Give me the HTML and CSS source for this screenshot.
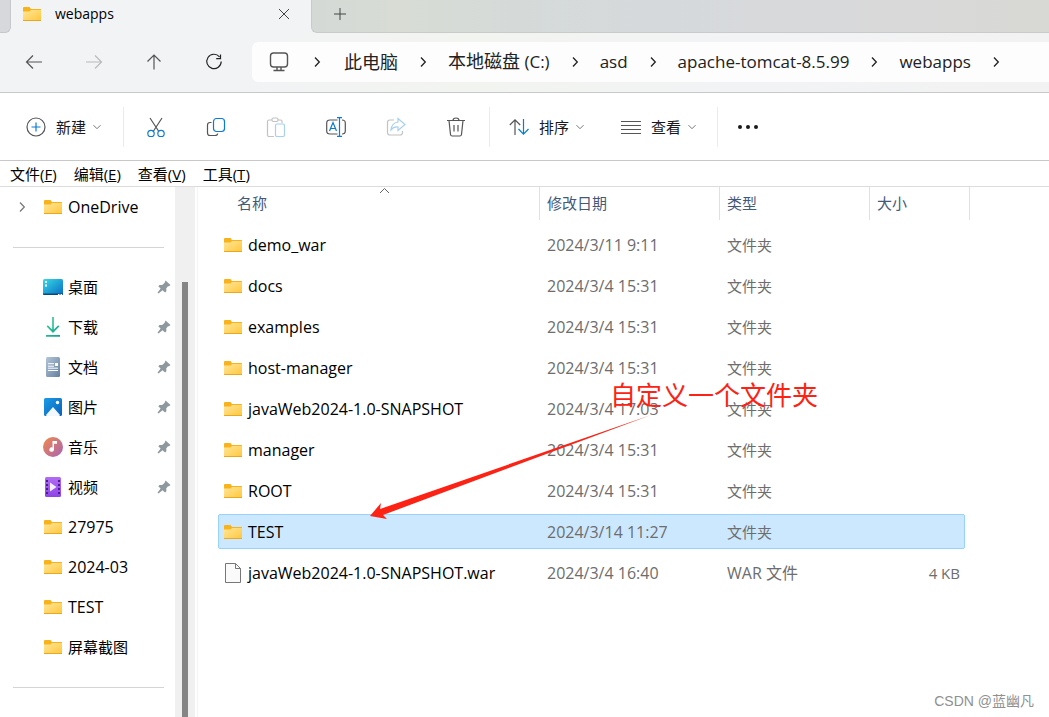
FILE: index.html
```html
<!DOCTYPE html>
<html lang="zh-CN">
<head>
<meta charset="utf-8">
<title>webapps</title>
<link rel="stylesheet" href="styles.css">
</head>
<body>
<svg class="defs" aria-hidden="true">
  <defs>
    <linearGradient id="gFolder" x1="0" y1="0" x2="1" y2="1"><stop offset="0" stop-color="#ffe69a"/><stop offset="1" stop-color="#ffc73a"/></linearGradient>
    <linearGradient id="gDesk" x1="0" y1="0" x2="1" y2="1"><stop offset="0" stop-color="#35dbe6"/><stop offset="1" stop-color="#0a6cc4"/></linearGradient>
    <linearGradient id="gDown" x1="0" y1="0" x2="1" y2="1"><stop offset="0" stop-color="#3ecf8a"/><stop offset="1" stop-color="#0f9f9c"/></linearGradient>
    <linearGradient id="gDoc" x1="0" y1="0" x2="1" y2="1"><stop offset="0" stop-color="#b3c5da"/><stop offset="1" stop-color="#64809f"/></linearGradient>
    <linearGradient id="gPic" x1="0" y1="0" x2="1" y2="1"><stop offset="0" stop-color="#1a9be6"/><stop offset="1" stop-color="#0a62b8"/></linearGradient>
    <linearGradient id="gMus" x1="0" y1="0" x2="1" y2="1"><stop offset="0" stop-color="#f2894a"/><stop offset="1" stop-color="#a763b4"/></linearGradient>
    <linearGradient id="gVid" x1="0" y1="0" x2="0" y2="1"><stop offset="0" stop-color="#b26cf2"/><stop offset="1" stop-color="#8e43e6"/></linearGradient>
  </defs>
  <symbol id="folder" viewBox="0 0 20 20">
    <path d="M1 4q0-1 1-1h5.500l1.500 2h9.500q.5 0 .5.500V10H1z" fill="#f8b31c"/>
    <path d="M1 7.500h6.500L9 6h10v11H1z" fill="url(#gFolder)"/>
    <path d="M1 16.500h18" stroke="#e9a820"/>
  </symbol>
  <symbol id="chev" viewBox="0 0 10 10"><path d="M1.500 3.200L5 6.700l3.500-3.500" fill="none" stroke="#777"/></symbol>
  <symbol id="next" viewBox="0 0 8 12"><path d="M2 1.500L6.300 6 2 10.500" fill="none" stroke="#222" stroke-width="1.300"/></symbol>
  <symbol id="pin" viewBox="0 0 14 14"><path d="M8.500 0.500l5 4.500-1.500 1.200-1 .1-1.800 2.200.2 2.700-1.300 1.300-2.600-2.300L1.500 13.500.5 12.800 3.600 8.500 1.300 6.200 2.500 5h2.700l2.300-2z" fill="#8e989f"/></symbol>
</svg>

<header class="tabs">
  <div class="tab-prev"></div>
  <div class="tab">
    <svg class="i20"><use href="#folder"/></svg>
    <span class="tab-title">webapps</span>
    <button class="icon-btn" aria-label="关闭"><svg width="12" height="12" fill="none" stroke="#444"><path d="M1 1l10 10M11 1L1 11"/></svg></button>
  </div>
  <div class="tab-rest"><button class="icon-btn" aria-label="新标签页"><svg width="12" height="12" fill="none" stroke="#444"><path d="M6 0v12M0 6h12"/></svg></button></div>
</header>

<div class="nav">
  <button class="nav-btn" aria-label="后退"><svg class="i20 line"><path d="M18 10H2.500M9 3.500L2.500 10 9 16.500"/></svg></button>
  <button class="nav-btn faded" aria-label="前进"><svg class="i20 line"><path d="M2 10h15.500M11 3.500l6.500 6.500-6.500 6.500"/></svg></button>
  <button class="nav-btn" aria-label="向上"><svg class="i20 line"><path d="M10 17.500V3M3.500 9.500L10 3l6.500 6.500"/></svg></button>
  <button class="nav-btn" aria-label="刷新"><svg class="i20 line dark"><path d="M15.500 4.800A7.200 7.200 0 1 0 17.200 9.500M16.500 2.500v4.200h-4.300"/></svg></button>
  <nav class="address" aria-label="地址">
    <svg class="i20 monitor" fill="none" stroke="#555" stroke-width="1.400"><rect x="1.500" y="1" width="17" height="14" rx="3"/><path d="M8 15v3M12 15v3M4.500 18.500h11"/></svg>
    <svg class="sep"><use href="#next"/></svg>
    <a href="#" class="han">此电脑</a><svg class="sep"><use href="#next"/></svg>
    <a href="#"><span class="han">本地磁盘</span> (C:)</a><svg class="sep"><use href="#next"/></svg>
    <a href="#">asd</a><svg class="sep"><use href="#next"/></svg>
    <a href="#">apache-tomcat-8.5.99</a><svg class="sep"><use href="#next"/></svg>
    <a href="#">webapps</a><svg class="sep"><use href="#next"/></svg>
  </nav>
</div>

<div class="toolbar">
  <button class="cmd first"><svg class="i20 line"><circle cx="10" cy="10" r="9"/><path class="blue" d="M10 5.500v9M5.500 10h9"/></svg>新建<svg class="chev"><use href="#chev"/></svg></button>
  <div class="group">
    <button class="tool" aria-label="剪切"><svg class="i20 line"><path d="M4 1l8.500 13M16 1L7.500 14"/><g class="blue"><circle cx="5" cy="16.500" r="3.200"/><circle cx="15" cy="16.500" r="3.200"/></g></svg></button>
    <button class="tool" aria-label="复制"><svg class="i20 line"><path d="M5.500 5.500H4q-2.500 0-2.500 2.500v8q0 2.500 2.500 2.500h5q2.500 0 2.700-2"/><rect class="blue" x="7.500" y="1.500" width="11" height="13" rx="3"/></svg></button>
    <button class="tool faded" aria-label="粘贴"><svg class="i20 line"><path d="M6 3H3Q1.500 3 1.500 4.500V18q0 1.500 1.500 1.500h5M12 3h2.500Q16 3 16 4.500V6"/><rect x="6" y="1" width="6" height="3.500" rx="1.500"/><rect class="blue" x="9.500" y="7" width="9" height="12.500" rx="1.500"/></svg></button>
    <button class="tool" aria-label="重命名"><svg class="i20 line"><path d="M11.500 3H4Q.7 3 .7 6v8q0 3 3.300 3h7.500M16 3q3.300 0 3.300 3v8q0 3-3.300 3"/><path class="blue" d="M3.500 14L7 5.500 10.500 14M4.800 11.500h4.500M13.500 1v18M11 .7h5M11 19.300h5"/></svg></button>
    <button class="tool faded" aria-label="共享"><svg class="i20 line"><path d="M8 3H4Q1.500 3 1.500 5.500v10Q1.500 18 4 18h10q2.500 0 2.500-2.500V14"/><path class="blue" d="M12 1.500L19 7.500l-7 6v-3.500q-4.500-.5-7 3Q5.500 6 12 5z"/></svg></button>
    <button class="tool" aria-label="删除"><svg class="i20 line"><path d="M1 3.500h18M7 3.500Q7 1 10 1t3 2.500M3 3.500l1.500 14q.2 1.500 1.700 1.500h7.600q1.500 0 1.700-1.500L17 3.500M8 8v6.500M12 8v6.500"/></svg></button>
  </div>
  <div class="group pair">
    <button class="cmd"><svg class="i20 line"><path d="M6 18V3M.8 8L6 2.800 11.200 8"/><path class="blue" d="M14.500 2v15M9.500 12l5 5.200 5-5.200"/></svg>排序<svg class="chev"><use href="#chev"/></svg></button>
    <button class="cmd"><svg class="i20 line"><path d="M0 4.500h20M0 8.500h20M0 12.500h20M0 16.500h20"/></svg>查看<svg class="chev"><use href="#chev"/></svg></button>
  </div>
  <button class="tool" aria-label="更多"><svg class="i20" fill="#1a1a1a"><circle cx="2" cy="10" r="2"/><circle cx="10" cy="10" r="2"/><circle cx="18" cy="10" r="2"/></svg></button>
</div>

<div class="menubar">
  <button>文件(<u>F</u>)</button><button>编辑(<u>E</u>)</button><button>查看(<u>V</u>)</button><button>工具(<u>T</u>)</button>
</div>

<div class="body">
  <aside class="side">
    <a class="item latin" href="#"><svg class="expand"><use href="#next"/></svg><svg class="i20"><use href="#folder"/></svg><span>OneDrive</span></a>
    <hr>
    <a class="item" href="#"><svg class="i20"><rect y="2" width="20" height="16" rx="1.500" fill="url(#gDesk)"/><path d="M0 16.500h20V17q0 1-1 1H1q-1 0-1-1z" fill="#0b4a78"/><path d="M2 4h2v2H2zM2 7.500h2v2H2z" fill="#fff"/><path d="M15 17.500h1.500M17.500 17.500H19" stroke="#fff"/></svg><span>桌面</span><svg class="pin"><use href="#pin"/></svg></a>
    <a class="item" href="#"><svg class="i20"><path d="M9.200 0h1.600v12.500l4.400-4.300 1.100 1.200L10 16 3.700 9.400l1.100-1.200 4.400 4.300zM3 18h14v1.800H3z" fill="url(#gDown)"/></svg><span>下载</span><svg class="pin"><use href="#pin"/></svg></a>
    <a class="item" href="#"><svg class="i20"><rect x="3" width="14" height="20" rx="1.500" fill="url(#gDoc)"/><path d="M5 6.700h6M5 9.200h6M5 11.200h10M5 13.500h10" stroke="#fff"/><path d="M12 6h3v3h-3z" fill="#fff"/></svg><span>文档</span><svg class="pin"><use href="#pin"/></svg></a>
    <a class="item" href="#"><svg class="i20"><rect x="1" y="1" width="18" height="18" rx="1.500" fill="url(#gPic)"/><path d="M3 18l7-8 7 8q-.5 1-1 1H4q-.7 0-1-1z" fill="#f2f8fe"/><circle cx="14.500" cy="5.500" r="1.700" fill="#fff"/></svg><span>图片</span><svg class="pin"><use href="#pin"/></svg></a>
    <a class="item" href="#"><svg class="i20"><circle cx="10" cy="10" r="10" fill="url(#gMus)"/><path d="M9.500 4H14v2.800h-3V12.500a2.300 2.300 0 1 1-1.500-2.100z" fill="#fff"/></svg><span>音乐</span><svg class="pin"><use href="#pin"/></svg></a>
    <a class="item" href="#"><svg class="i20"><rect x="2" width="16" height="20" rx="1.500" fill="url(#gVid)"/><path d="M4 3v15M16 3v15" stroke="#4a1b93" stroke-width="2" stroke-dasharray="2 2"/><path d="M7 5.500v9l6.500-4.500z" fill="#f4efff"/></svg><span>视频</span><svg class="pin"><use href="#pin"/></svg></a>
    <a class="item latin" href="#"><svg class="i20"><use href="#folder"/></svg><span>27975</span></a>
    <a class="item latin" href="#"><svg class="i20"><use href="#folder"/></svg><span>2024-03</span></a>
    <a class="item latin" href="#"><svg class="i20"><use href="#folder"/></svg><span>TEST</span></a>
    <a class="item" href="#"><svg class="i20"><use href="#folder"/></svg><span>屏幕截图</span></a>
    <hr>
  </aside>
  <div class="scroll"><div class="thumb"></div></div>
  <main class="files">
    <table>
      <thead><tr><th>名称<svg class="sorted" fill="none" stroke="#666"><path d="M1 6l4.500-4.500L10 6"/></svg></th><th>修改日期</th><th>类型</th><th>大小</th></tr></thead>
      <tbody>
        <tr><td class="latin"><svg class="i20"><use href="#folder"/></svg>demo_war</td><td class="latin">2024/3/11 9:11</td><td>文件夹</td><td></td></tr>
        <tr><td class="latin"><svg class="i20"><use href="#folder"/></svg>docs</td><td class="latin">2024/3/4 15:31</td><td>文件夹</td><td></td></tr>
        <tr><td class="latin"><svg class="i20"><use href="#folder"/></svg>examples</td><td class="latin">2024/3/4 15:31</td><td>文件夹</td><td></td></tr>
        <tr><td class="latin"><svg class="i20"><use href="#folder"/></svg>host-manager</td><td class="latin">2024/3/4 15:31</td><td>文件夹</td><td></td></tr>
        <tr><td class="latin"><svg class="i20"><use href="#folder"/></svg>javaWeb2024-1.0-SNAPSHOT</td><td class="latin">2024/3/4 17:03</td><td>文件夹</td><td></td></tr>
        <tr><td class="latin"><svg class="i20"><use href="#folder"/></svg>manager</td><td class="latin">2024/3/4 15:31</td><td>文件夹</td><td></td></tr>
        <tr><td class="latin"><svg class="i20"><use href="#folder"/></svg>ROOT</td><td class="latin">2024/3/4 15:31</td><td>文件夹</td><td></td></tr>
        <tr class="selected"><td class="latin"><svg class="i20"><use href="#folder"/></svg>TEST</td><td class="latin">2024/3/14 11:27</td><td>文件夹</td><td></td></tr>
        <tr><td class="latin"><svg class="i20"><path d="M2.500.5h10l5 5v14h-15z" fill="#fafafa" stroke="#777"/><path d="M12.500.5v5h5" fill="none" stroke="#777"/></svg>javaWeb2024-1.0-SNAPSHOT.war</td><td class="latin">2024/3/4 16:40</td><td class="latin">WAR 文件</td><td>4 KB</td></tr>
      </tbody>
    </table>
    <svg class="arrow" width="282" height="106" aria-hidden="true"><path d="M281 0L10 94l1-6L0 101l17 3-4-4z" fill="#fd2214"/></svg>
    <p class="note">自定义一个文件夹</p>
    <p class="credit">CSDN @蓝幽凡</p>
  </main>
</div>
</body>
</html>
```
FILE: styles.css
```css
* { box-sizing: border-box; }
body {
  margin: 0;
  height: 100vh;
  display: flex;
  flex-direction: column;
  overflow: hidden;
  background: #fff;
  color: #000;
  font: 15px/20px "Open Sans", "Noto Sans CJK SC", sans-serif;
}
button { font: inherit; color: inherit; background: none; border: 0; padding: 0; }
a { color: inherit; text-decoration: none; }
svg { flex: none; }
.defs { position: absolute; width: 0; height: 0; }
.latin { font-size: 16px; }
.i20 { width: 20px; height: 20px; }
.line { fill: none; stroke: #555; stroke-width: 1.200; }
.dark { stroke: #222; }
.blue { stroke: #0a7bd2; }
.faded { opacity: .35; }

.tabs { display: flex; flex: none; height: 33px; background: #f2f3f5; }
.tab-prev { width: 11px; background: #d6d8dc; border: 1px solid #c6c9cb; border-width: 0 1px 1px 0; border-radius: 0 0 6px 0; }
.tab { width: 300px; display: flex; align-items: center; padding: 0 20px 6px 11px; }
.tab-title { flex: 1; margin-left: 13px; font-size: 14px; font-weight: 500; }
.icon-btn { display: grid; place-items: center; width: 14px; height: 20px; }
.tab-rest {
  flex: 1;
  padding: 4px 21px;
  border: 1px solid #c8cbca;
  border-width: 0 0 1px 1px;
  border-radius: 0 0 0 6px;
  background: linear-gradient(90deg, #d5d9d6, #d8dcd5 12%, #d5dad9 28%, #d6d9dc 50%, #d9d9da 78%, #d8d9d4);
}

.nav {
  display: flex;
  flex: none;
  align-items: center;
  height: 60px;
  padding: 0 0 2px 4px;
  border-bottom: 1px solid #c6c9ca;
  background: linear-gradient(90deg, #f2f3f5 22%, #f2f4f0 45%, #f2f3f5 72%, #f2f2f2);
}
.nav-btn { display: grid; place-items: center; width: 60px; height: 40px; }
.address {
  flex: 1;
  display: flex;
  align-items: center;
  height: 40px;
  margin-left: 8px;
  padding-left: 17px;
  border-radius: 6px 0 0 6px;
  background: #fcfdfc;
  color: #222;
  font-size: 17px;
  white-space: nowrap;
}
.han { font-size: 18px; }
.sep { width: 8px; height: 12px; margin: 0 21px; }
.monitor + .sep { margin: 0 23px 0 24px; }

.toolbar { display: flex; flex: none; align-items: center; height: 68px; border-bottom: 1px solid #c8c8c8; color: #1a1a1a; }
.cmd { display: flex; align-items: center; gap: 10px; }
.chev { width: 10px; height: 10px; margin-left: -4px; }
.first { margin: 0 21px 0 26px; }
.group { display: flex; height: 40px; padding: 0 3px 0 2px; border: 1px solid #ebebeb; border-width: 0 1px; }
.pair { gap: 36px; padding: 0 20px 0 19px; border-left: 0; }
.tool { display: grid; place-items: center; width: 60px; height: 40px; }

.menubar { display: flex; flex: none; gap: 17px; height: 26px; padding-left: 10px; border-bottom: 1px solid #dcdcdc; }
.menubar button { height: 26px; }

.body { flex: 1; display: flex; min-height: 0; }
.side { width: 175px; overflow: hidden; }
.item { display: flex; align-items: center; height: 40px; padding: 0 4px 0 43px; }
.item span { flex: 1; margin-left: 5px; }
.expand { width: 8px; height: 12px; margin: 0 17px 0 -25px; opacity: .6; }
.pin { width: 14px; height: 14px; }
.side hr { height: 1px; margin: 20px 11px 19px 13px; border: 0; background: #d4d4d4; }
.scroll { flex: none; width: 20px; padding: 95px 7px 0; background: #f0f0f0; }
.thumb { height: 100%; background: #858585; }

.files { position: relative; flex: 1; margin-left: 2px; padding-left: 20px; border-left: 1px solid #f5f5f5; }
table, thead, tbody { display: block; }
tr { display: grid; grid-template-columns: 321px 180px 150px 96px; width: 747px; height: 35px; margin-bottom: 6px; border: 1px solid transparent; border-radius: 2px; }
thead tr { grid-template-columns: 322px 180px 150px 100px; width: 752px; height: 33px; margin-bottom: 7px; border: 0; }
th { position: relative; padding: 6px 0 0 7px; border-right: 1px solid #e0e0e0; text-align: left; font-weight: 400; color: #44597a; }
th:first-child { padding-left: 19px; }
.sorted { position: absolute; top: 0; left: 50%; width: 11px; height: 7px; }
td { display: flex; align-items: center; padding: 0 0 0 7px; color: #6d6d6d; }
td:first-child { padding-left: 4px; gap: 5px; color: #000; }
td:last-child { justify-content: flex-end; padding-right: 6px; }
.selected { background: #cce8ff; border-color: #99d1ff; }

.arrow { position: absolute; left: 172px; top: 228px; }
.note { position: absolute; left: 412px; top: 192px; margin: 0; color: #fd2214; font-size: 26px; line-height: 32px; }
.credit { position: absolute; right: 15px; bottom: 6px; margin: 0; color: #909090; font: 14px/20px "Liberation Sans", "Noto Sans CJK SC", sans-serif; }
```
